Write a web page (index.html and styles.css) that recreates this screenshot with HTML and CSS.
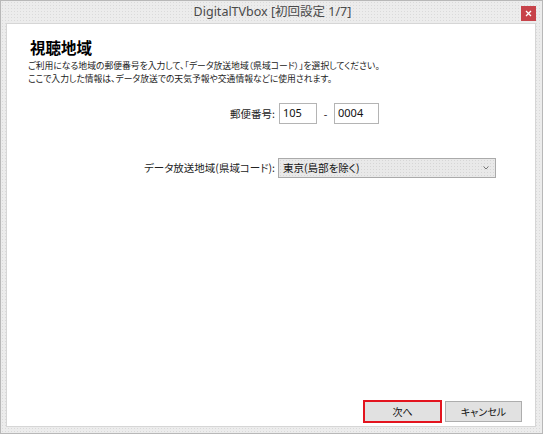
FILE: index.html
```html
<!DOCTYPE html>
<html lang="ja">
<head>
<meta charset="utf-8">
<title>DigitalTVbox [初回設定 1/7]</title>
<link rel="stylesheet" href="styles.css">
</head>
<body>
<div class="window">
  <div class="titlebar">
    <span class="spacer"></span>
    <span class="title">DigitalTVbox [初回設定 1/7]</span>
    <span class="controls">
      <span class="close">
        <svg width="7" height="7" viewBox="0 0 7 7"><path d="M1 1 L6 6 M6 1 L1 6" stroke="#fff" stroke-width="1.3" fill="none"/></svg>
      </span>
    </span>
  </div>
  <div class="content">
    <h1 class="heading">視聴地域</h1>
    <p class="desc">ご利用になる地域の郵便番号を入力して、「データ放送地域（県域コード）」を選択してください。<br>ここで入力した情報は、データ放送での天気予報や交通情報などに使用されます。</p>
    <div class="form">
      <div class="row postal-row">
        <label class="label">郵便番号:</label>
        <div class="postal">
          <span class="input w1">105</span>
          <span class="dash">-</span>
          <span class="input w2">0004</span>
        </div>
      </div>
      <div class="row select-row">
        <label class="label">データ放送地域(県域コード):</label>
        <div class="select">
          <span class="select-text">東京(島部を除く)</span>
          <svg class="chev" width="6" height="4" viewBox="0 0 6 4"><path d="M0.5 0.5 L3 3 L5.5 0.5" stroke="#777" stroke-width="1" fill="none"/></svg>
        </div>
      </div>
    </div>
    <div class="buttons">
      <button class="btn btn-next">次へ</button>
      <button class="btn">キャンセル</button>
    </div>
  </div>
</div>
</body>
</html>
```

FILE: styles.css
```css
* { box-sizing: border-box; }
html, body { margin: 0; padding: 0; }
body {
  width: 543px;
  height: 434px;
  background: #ffffff;
  font-family: "Noto Sans CJK JP", "Noto Sans", sans-serif;
  font-feature-settings: "palt";
  color: #1a1a1a;
}
.window {
  width: 543px;
  height: 434px;
  border: 1px solid #b8b8b8;
  background-color: #ececec;
  background-image: radial-gradient(#dadada 0.7px, transparent 0.9px);
  background-size: 3px 3px;
  display: flex;
  flex-direction: column;
}
.titlebar {
  height: 22px;
  display: grid;
  grid-template-columns: 1fr auto 1fr;
  align-items: center;
}
.title {
  font-family: "Noto Sans", "Noto Sans CJK JP", sans-serif;
  font-feature-settings: normal;
  font-size: 12.5px;
  color: #4a4a4a;
  line-height: 22px;
  padding-left: 2px;
}
.controls {
  display: flex;
  justify-content: flex-end;
  padding-right: 6px;
}
.close {
  width: 15px;
  height: 15px;
  margin-top: 2px;
  background: #c7434a;
  display: flex;
  align-items: center;
  justify-content: center;
}
.content {
  flex: 1;
  margin: 0 6px 6px 5px;
  border: 1px solid #d6d6d6;
  background: #ffffff;
  padding: 13px 13px 4px 21px;
  display: flex;
  flex-direction: column;
}
.heading {
  margin: 0;
  font-size: 15.5px;
  line-height: 20px;
  font-weight: 700;
  color: #000;
  padding-left: 2px;
}
.desc {
  margin: 3px 0 0 0;
  font-size: 8.8px;
  line-height: 12.8px;
  color: #222;
}
.form {
  display: grid;
  grid-template-columns: 247px auto;
  column-gap: 3px;
}
.row {
  display: contents;
}
.label {
  justify-self: end;
  align-self: center;
  font-size: 10.5px;
  color: #222;
}
.postal-row .label, .postal { margin-top: 17px; }
.select-row .label, .select { margin-top: 34px; }
.postal {
  display: flex;
  align-items: center;
  padding-left: 1px;
}
.input {
  height: 21px;
  border: 1px solid #b4b4b4;
  background: #fff;
  font-family: "Noto Sans", sans-serif;
  font-size: 11px;
  line-height: 17px;
  padding-left: 3px;
  color: #111;
}
.w1 { width: 38px; }
.w2 { width: 45px; }
.dash {
  width: 17px;
  text-align: center;
  font-family: "Noto Sans", sans-serif;
  font-size: 11px;
  color: #333;
}
.select {
  width: 218px;
  height: 20px;
  border: 1px solid #aaaaaa;
  background-color: #e9e9e9;
  background-image: radial-gradient(#d6d6d6 0.7px, transparent 0.9px);
  background-size: 3px 3px;
  display: flex;
  align-items: center;
  justify-content: space-between;
  padding: 0 6px 0 4px;
}
.select-text {
  font-size: 10.5px;
  color: #111;
}
.buttons {
  margin-top: auto;
  display: flex;
  justify-content: flex-end;
  gap: 4px;
}
.btn {
  width: 77px;
  height: 21px;
  border: 1px solid #adadad;
  background: #e1e1e1;
  font-family: "Noto Sans CJK JP", sans-serif;
  font-feature-settings: "palt";
  font-size: 10px;
  color: #111;
  padding: 0;
}
.btn-next {
  outline: 2px solid #e3141e;
  outline-offset: -1px;
}
```
